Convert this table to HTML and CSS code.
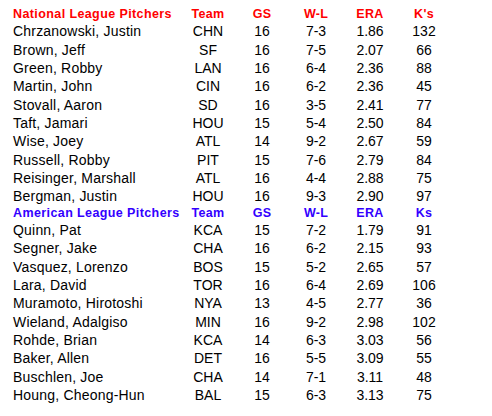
FILE: index.html
```html
<!DOCTYPE html>
<html>
<head>
<meta charset="utf-8">
<link rel="stylesheet" href="styles.css">
</head>
<body>
<div class="sheet">
  <div class="row head nl"><span class="name">National League Pitchers</span><span>Team</span><span>GS</span><span>W-L</span><span>ERA</span><span>K's</span></div>
  <div class="row"><span class="name">Chrzanowski, Justin</span><span>CHN</span><span>16</span><span>7-3</span><span>1.86</span><span>132</span></div>
  <div class="row"><span class="name">Brown, Jeff</span><span>SF</span><span>16</span><span>7-5</span><span>2.07</span><span>66</span></div>
  <div class="row"><span class="name">Green, Robby</span><span>LAN</span><span>16</span><span>6-4</span><span>2.36</span><span>88</span></div>
  <div class="row"><span class="name">Martin, John</span><span>CIN</span><span>16</span><span>6-2</span><span>2.36</span><span>45</span></div>
  <div class="row"><span class="name">Stovall, Aaron</span><span>SD</span><span>16</span><span>3-5</span><span>2.41</span><span>77</span></div>
  <div class="row"><span class="name">Taft, Jamari</span><span>HOU</span><span>15</span><span>5-4</span><span>2.50</span><span>84</span></div>
  <div class="row"><span class="name">Wise, Joey</span><span>ATL</span><span>14</span><span>9-2</span><span>2.67</span><span>59</span></div>
  <div class="row"><span class="name">Russell, Robby</span><span>PIT</span><span>15</span><span>7-6</span><span>2.79</span><span>84</span></div>
  <div class="row"><span class="name">Reisinger, Marshall</span><span>ATL</span><span>16</span><span>4-4</span><span>2.88</span><span>75</span></div>
  <div class="row"><span class="name">Bergman, Justin</span><span>HOU</span><span>16</span><span>9-3</span><span>2.90</span><span>97</span></div>
  <div class="row head al"><span class="name">American League Pitchers</span><span>Team</span><span>GS</span><span>W-L</span><span>ERA</span><span>Ks</span></div>
  <div class="row"><span class="name">Quinn, Pat</span><span>KCA</span><span>15</span><span>7-2</span><span>1.79</span><span>91</span></div>
  <div class="row"><span class="name">Segner, Jake</span><span>CHA</span><span>16</span><span>6-2</span><span>2.15</span><span>93</span></div>
  <div class="row"><span class="name">Vasquez, Lorenzo</span><span>BOS</span><span>15</span><span>5-2</span><span>2.65</span><span>57</span></div>
  <div class="row"><span class="name">Lara, David</span><span>TOR</span><span>16</span><span>6-4</span><span>2.69</span><span>106</span></div>
  <div class="row"><span class="name">Muramoto, Hirotoshi</span><span>NYA</span><span>13</span><span>4-5</span><span>2.77</span><span>36</span></div>
  <div class="row"><span class="name">Wieland, Adalgiso</span><span>MIN</span><span>16</span><span>9-2</span><span>2.98</span><span>102</span></div>
  <div class="row"><span class="name">Rohde, Brian</span><span>KCA</span><span>14</span><span>6-3</span><span>3.03</span><span>56</span></div>
  <div class="row"><span class="name">Baker, Allen</span><span>DET</span><span>16</span><span>5-5</span><span>3.09</span><span>55</span></div>
  <div class="row"><span class="name">Buschlen, Joe</span><span>CHA</span><span>14</span><span>7-1</span><span>3.11</span><span>48</span></div>
  <div class="row"><span class="name">Houng, Cheong-Hun</span><span>BAL</span><span>15</span><span>6-3</span><span>3.13</span><span>75</span></div>
</div>
</body>
</html>
```

FILE: styles.css
```css
html, body {
  margin: 0;
  padding: 0;
  background: #ffffff;
}

.sheet {
  padding: 7px 0 0 10px;
  font-family: "Liberation Sans", Arial, sans-serif;
  color: #000000;
}

.row {
  display: grid;
  grid-template-columns: 171px repeat(5, 54px);
  height: 18.33px;
  line-height: 18.33px;
  font-size: 14px;
  white-space: nowrap;
}

.row span {
  text-align: center;
}

.row .name {
  text-align: left;
  padding-left: 3px;
  letter-spacing: 0.2px;
}

.head {
  height: 15.4px;
  line-height: 15.4px;
  font-size: 12.5px;
  font-weight: bold;
  letter-spacing: 0.3px;
}

.head .name {
  letter-spacing: 0.4px;
}

.nl {
  color: #ff0000;
}

.al {
  color: #3300ff;
}
```
